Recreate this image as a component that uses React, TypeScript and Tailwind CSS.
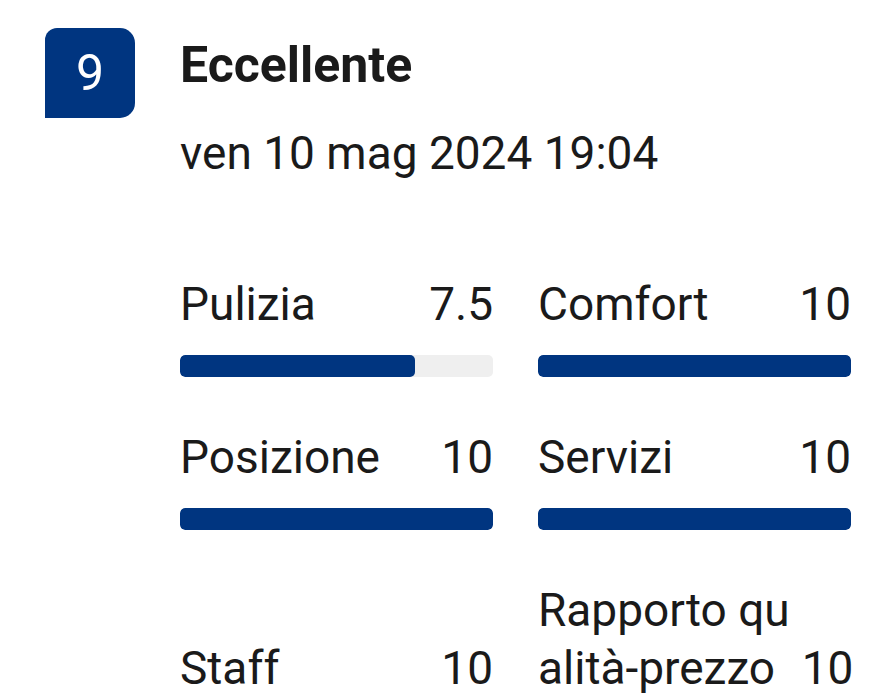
import React from "react";

type Item = { label: React.ReactNode; value: string; pct: number };

const items: Item[] = [
  { label: "Pulizia", value: "7.5", pct: 75 },
  { label: "Comfort", value: "10", pct: 100 },
  { label: "Posizione", value: "10", pct: 100 },
  { label: "Servizi", value: "10", pct: 100 },
  { label: "Staff", value: "10", pct: 100 },
  {
    label: (
      <>
        Rapporto qu
        <br />
        alità-prezzo
      </>
    ),
    value: "10",
    pct: 100,
  },
];

function Cell({ item }: { item: Item }) {
  return (
    <div className="flex flex-col justify-end">
      <div className="flex items-end justify-between gap-3 text-[46px] leading-[58px] text-[#1a1a1a]">
        <span className="whitespace-nowrap">{item.label}</span>
        <span className="whitespace-nowrap">{item.value}</span>
      </div>
      <div className="mt-[22px] h-[22px] rounded-[5px] bg-[#efefef] overflow-hidden">
        <div
          className="h-full rounded-[5px] bg-[#003580]"
          style={{ width: `${item.pct}%` }}
        />
      </div>
    </div>
  );
}

export default function App() {
  return (
    <div
      className="w-[896px] h-[700px] overflow-hidden bg-white flex gap-[45px] pl-[45px] pr-[45px] pt-[28px]"
      style={{ fontFamily: "Roboto, 'Noto Sans', sans-serif" }}
    >
      <div className="w-[90px] h-[90px] shrink-0 bg-[#003580] rounded-tl-[12px] rounded-tr-[15px] rounded-br-[15px] flex items-center justify-center text-white text-[50px] leading-none">
        9
      </div>
      <div className="flex-1 min-w-0">
        <div className="mt-[7px] text-[50px] leading-[60px] font-bold text-[#1a1a1a]">
          Eccellente
        </div>
        <div className="mt-[30px] text-[46px] leading-[56px] text-[#1a1a1a]">
          ven 10 mag 2024 19:04
        </div>
        <div className="mt-[94px] grid grid-cols-2 gap-x-[45px] gap-y-[51px]">
          {items.map((it, i) => (
            <Cell key={i} item={it} />
          ))}
        </div>
      </div>
    </div>
  );
}
